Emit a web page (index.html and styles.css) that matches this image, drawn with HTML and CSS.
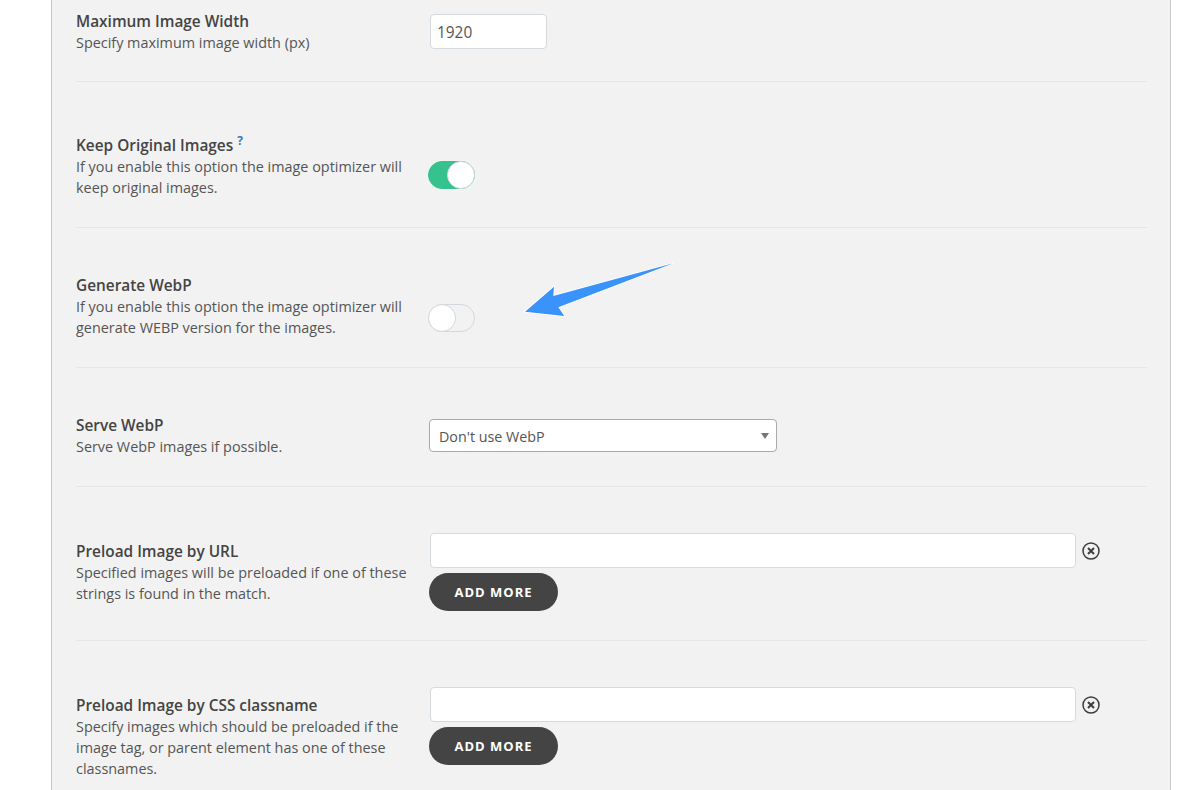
FILE: index.html
```html
<!DOCTYPE html>
<html lang="en">
<head>
    <meta charset="UTF-8">
    <meta name="viewport" content="width=device-width, initial-scale=1.0">
    <title>Image Optimizer Settings</title>
    <link rel="stylesheet" href="styles.css">
</head>
<body>

<div class="panel">
    <div class="row first-row">
        <div class="label-col">
            <div class="title">Maximum Image Width</div>
            <div class="desc">Specify maximum image width (px)</div>
        </div>
        <div class="field-col field-width">
            <input class="text-input small-input" type="text" value="1920">
        </div>
    </div>

    <div class="row">
        <div class="label-col">
            <div class="title title-help">Keep Original Images <sup class="help">?</sup></div>
            <div class="desc">If you enable this option the image optimizer will keep original images.</div>
        </div>
        <div class="field-col field-keep">
            <span class="toggle on"><span class="knob"></span></span>
        </div>
    </div>

    <div class="row">
        <div class="label-col">
            <div class="title">Generate WebP</div>
            <div class="desc">If you enable this option the image optimizer will generate WEBP version for the images.</div>
        </div>
        <div class="field-col field-webp">
            <span class="toggle"><span class="knob"></span></span>
        </div>
    </div>

    <div class="row">
        <div class="label-col">
            <div class="title">Serve WebP</div>
            <div class="desc">Serve WebP images if possible.</div>
        </div>
        <div class="field-col field-serve">
            <div class="select-box">Don't use WebP</div>
        </div>
    </div>

    <div class="row">
        <div class="label-col label-list">
            <div class="title">Preload Image by URL</div>
            <div class="desc">Specified images will be preloaded if one of these strings is found in the match.</div>
        </div>
        <div class="field-col">
            <div class="input-line">
                <input class="text-input wide-input" type="text">
                <svg class="remove-icon" viewBox="0 0 18 18" width="18" height="18">
                    <circle cx="9" cy="9" r="8" fill="none" stroke="#3d3d3d" stroke-width="1.5"/>
                    <path d="M6 6l6 6M12 6l-6 6" fill="none" stroke="#3d3d3d" stroke-width="2"/>
                </svg>
            </div>
            <a class="add-button">ADD MORE</a>
        </div>
    </div>

    <div class="row last-row">
        <div class="label-col label-list">
            <div class="title">Preload Image by CSS classname</div>
            <div class="desc">Specify images which should be preloaded if the image tag, or parent element has one of these classnames.</div>
        </div>
        <div class="field-col">
            <div class="input-line">
                <input class="text-input wide-input" type="text">
                <svg class="remove-icon" viewBox="0 0 18 18" width="18" height="18">
                    <circle cx="9" cy="9" r="8" fill="none" stroke="#3d3d3d" stroke-width="1.5"/>
                    <path d="M6 6l6 6M12 6l-6 6" fill="none" stroke="#3d3d3d" stroke-width="2"/>
                </svg>
            </div>
            <a class="add-button">ADD MORE</a>
        </div>
    </div>
</div>

<svg class="arrow" viewBox="0 0 1200 790" width="1200" height="790">
    <path d="M525 311.7L554 286.7L553.3 296L673.3 263.3L558.3 307.3L564.3 316Z" fill="#3a92fb" stroke="#fff" stroke-width="1.6" paint-order="stroke"/>
</svg>

</body>
</html>
```

FILE: styles.css
```css
body {
    font-family: "Open Sans", Arial, sans-serif;
    margin: 0;
    padding: 0;
    height: 790px;
    overflow: hidden;
    background-color: #fff;
    color: #444;
}

.panel {
    box-sizing: border-box;
    width: 1120px;
    margin-left: 51px;
    padding: 0 23px 0 24px;
    background-color: #f2f2f2;
    border-left: 1px solid #c8c8c8;
    border-right: 1px solid #c8c8c8;
}

.row {
    display: flex;
    padding: 46px 0 29px;
    border-bottom: 1px solid #e6e6e6;
}

.first-row {
    padding: 10px 0 28px;
}

.last-row {
    border-bottom: none;
}

.label-col {
    width: 354px;
    flex-shrink: 0;
}

.label-list {
    padding-top: 7px;
}

.title {
    margin-bottom: -2px;
    font-size: 15.4px;
    font-weight: 600;
    line-height: 24px;
}

.title-help {
    padding-top: 6px;
}

.help {
    font-size: 12px;
    font-weight: 700;
    color: #3b78b5;
    line-height: 0;
}

.desc {
    width: 340px;
    font-size: 14.4px;
    line-height: 21px;
    color: #555;
}

.field-width {
    padding-top: 4px;
}

.field-keep {
    padding-top: 33px;
}

.field-webp {
    padding-top: 30px;
}

.field-serve {
    padding-top: 5px;
}

.text-input {
    box-sizing: border-box;
    height: 35px;
    padding: 2px 6px 0;
    border: 1px solid #d5dadf;
    border-radius: 4px;
    background-color: #fff;
    font-family: "Open Sans", Arial, sans-serif;
    font-size: 15.4px;
    color: #555;
}

.small-input {
    width: 117px;
}

.wide-input {
    width: 646px;
}

.input-line {
    display: flex;
    align-items: center;
    gap: 6px;
}

.remove-icon {
    display: block;
}

.toggle {
    display: block;
    box-sizing: border-box;
    position: relative;
    margin-left: -2px;
    width: 47px;
    height: 28px;
    border: 1px solid #d3d8dc;
    border-radius: 14px;
}

.toggle.on {
    background-color: #35c28f;
    border-color: #35c28f;
}

.knob {
    position: absolute;
    left: -1px;
    top: -1px;
    box-sizing: border-box;
    width: 28px;
    height: 28px;
    border: 1px solid #d3d8dc;
    border-radius: 50%;
    background-color: #fff;
}

.toggle.on .knob {
    left: auto;
    right: -1px;
}

.select-box {
    box-sizing: border-box;
    position: relative;
    margin-left: -1px;
    width: 348px;
    height: 33px;
    padding: 0 9px;
    border: 1px solid #aaa;
    border-radius: 4px;
    background-color: #fff;
    font-size: 14.3px;
    line-height: 33px;
    color: #555;
}

.select-box::after {
    content: "";
    position: absolute;
    right: 7px;
    top: 13px;
    border-left: 4.5px solid transparent;
    border-right: 4.5px solid transparent;
    border-top: 6px solid #777;
}

.add-button {
    display: block;
    box-sizing: border-box;
    margin: 5px 0 0 -1px;
    width: 129px;
    height: 38px;
    border-radius: 19px;
    background-color: #444;
    color: #fff;
    font-size: 13px;
    font-weight: 700;
    letter-spacing: 1px;
    line-height: 38px;
    text-align: center;
}

.arrow {
    position: absolute;
    left: 0;
    top: 0;
}
```
